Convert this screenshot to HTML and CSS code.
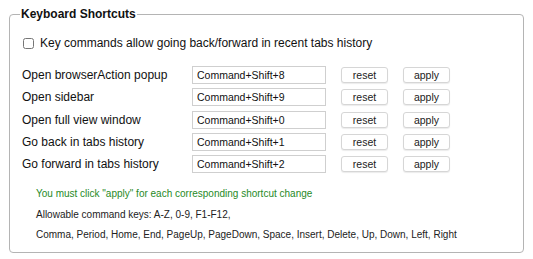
FILE: index.html
```html
<!DOCTYPE html>
<html lang="en">
<head>
    <meta charset="UTF-8">
    <title>Options</title>
    <link rel="stylesheet" href="styles.css">
</head>
<body>
    <fieldset class="shortcuts">
        <legend>Keyboard Shortcuts</legend>

        <label class="history-option">
            <input type="checkbox" id="historyKeys">
            <span>Key commands allow going back/forward in recent tabs history</span>
        </label>

        <div class="shortcut-list">
            <div class="shortcut">
                <span class="shortcut-name">Open browserAction popup</span>
                <input type="text" class="shortcut-key" value="Command+Shift+8">
                <button class="btn">reset</button>
                <button class="btn">apply</button>
            </div>
            <div class="shortcut">
                <span class="shortcut-name">Open sidebar</span>
                <input type="text" class="shortcut-key" value="Command+Shift+9">
                <button class="btn">reset</button>
                <button class="btn">apply</button>
            </div>
            <div class="shortcut">
                <span class="shortcut-name">Open full view window</span>
                <input type="text" class="shortcut-key" value="Command+Shift+0">
                <button class="btn">reset</button>
                <button class="btn">apply</button>
            </div>
            <div class="shortcut">
                <span class="shortcut-name">Go back in tabs history</span>
                <input type="text" class="shortcut-key" value="Command+Shift+1">
                <button class="btn">reset</button>
                <button class="btn">apply</button>
            </div>
            <div class="shortcut">
                <span class="shortcut-name">Go forward in tabs history</span>
                <input type="text" class="shortcut-key" value="Command+Shift+2">
                <button class="btn">reset</button>
                <button class="btn">apply</button>
            </div>
        </div>

        <div class="notes">
            <p class="note-warning">You must click "apply" for each corresponding shortcut change</p>
            <p>Allowable command keys: A-Z, 0-9, F1-F12,</p>
            <p>Comma, Period, Home, End, PageUp, PageDown, Space, Insert, Delete, Up, Down, Left, Right</p>
        </div>
    </fieldset>
</body>
</html>
```

FILE: styles.css
```css
body {
    font-family: "Liberation Sans", Arial, sans-serif;
    margin: 7px 8px;
    background-color: white;
    color: #111;
}
.shortcuts {
    margin: 0 1px;
    padding: 0 12px 6px 12px;
    border: 1.5px solid #b4b4b4;
    border-radius: 4px;
}
.shortcuts legend {
    font-size: 12px;
    font-weight: bold;
    padding: 0 1px;
    margin-left: -2px;
}
.history-option {
    display: flex;
    align-items: center;
    font-size: 12px;
    margin-top: 15px;
}
.history-option input {
    width: 11px;
    height: 11px;
    margin: 0 6px 0 1px;
}
.shortcut-list {
    margin-top: 14px;
}
.shortcut {
    display: flex;
    align-items: center;
    height: 22.3px;
}
.shortcut-name {
    width: 170px;
    font-size: 12px;
}
.shortcut-key {
    width: 134px;
    height: 18px;
    box-sizing: border-box;
    border: 1px solid #cfcfcf;
    padding: 0 4px;
    margin: 0;
    font-family: "Liberation Sans", Arial, sans-serif;
    font-size: 10.5px;
    color: #111;
}
.btn {
    width: 47px;
    height: 16px;
    margin: 0 0 0 15px;
    padding: 0;
    background-color: white;
    border: 1px solid #d6d6d6;
    border-radius: 3px;
    box-shadow: 0 1px 1px rgba(0,0,0,0.08);
    font-family: "Liberation Sans", Arial, sans-serif;
    font-size: 10.5px;
    color: #222;
}
.notes {
    margin-top: 9px;
    padding-left: 14px;
    font-size: 10px;
    color: #222;
}
.notes p {
    margin: 0;
    line-height: 20.5px;
}
.note-warning {
    color: #1f8a1f;
}
```
